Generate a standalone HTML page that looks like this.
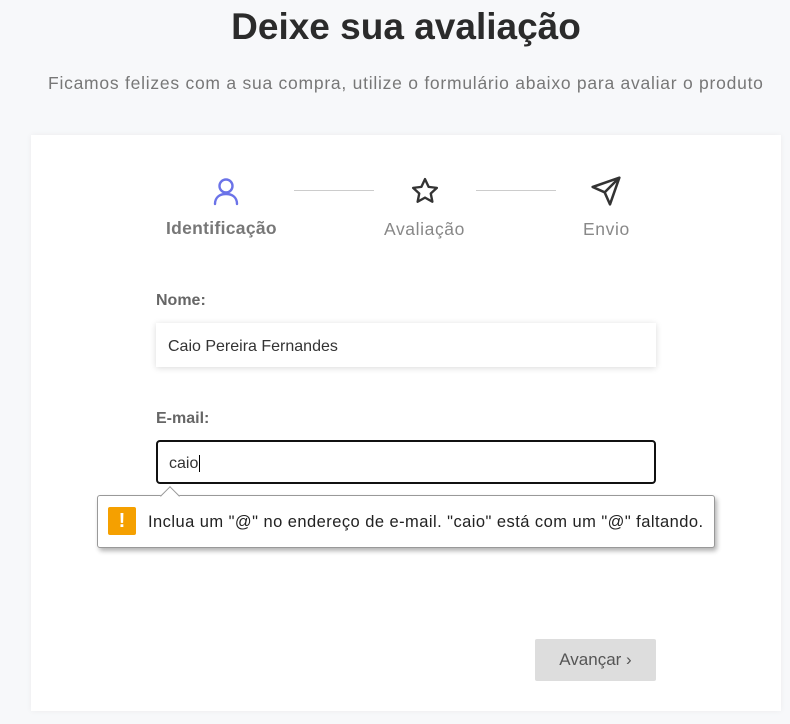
<!DOCTYPE html>
<html><head><meta charset="utf-8"><style>
*{box-sizing:border-box;margin:0;padding:0}
body{width:790px;height:724px;background:#f7f8fa;font-family:"Liberation Sans",sans-serif;position:relative;overflow:hidden;color:#333}
h1{position:absolute;top:6px;left:0;width:812px;text-align:center;font-size:37px;font-weight:bold;color:#2b2b2b}
.sub{position:absolute;top:73px;left:48px;font-size:17.5px;color:#777;letter-spacing:0.75px;white-space:nowrap}
.card{position:absolute;left:31px;top:135px;width:750px;height:576px;background:#fff;box-shadow:0 0 6px rgba(0,0,0,.05)}
.lbl{position:absolute;font-size:17.5px;color:#888;white-space:nowrap;letter-spacing:0.6px}
.line{position:absolute;top:190px;height:1px;background:#ccc}
.flab{position:absolute;left:156px;font-size:16px;font-weight:bold;color:#666}
.inp{position:absolute;left:156px;width:500px;height:44px;background:#fff;font-size:16px;color:#333;padding:14px 12px}
.tip{position:absolute;left:97px;top:495px;width:618px;height:53px;background:#fff;border:1px solid #999;border-radius:3px;box-shadow:2px 3px 5px rgba(0,0,0,.3);font-size:16.5px;color:#222}
.btn{position:absolute;left:535px;top:639px;width:121px;height:42px;background:#ddd;border-radius:2px;font-size:17px;color:#555;text-align:center;line-height:42px}
</style></head><body>
<h1>Deixe sua avaliação</h1>
<div class="sub">Ficamos felizes com a sua compra, utilize o formulário abaixo para avaliar o produto</div>
<div class="card"></div>
<svg style="position:absolute;left:212px;top:176px" width="28" height="30" viewBox="0 0 28 30" fill="none" stroke="#6b73e8" stroke-width="2.4" stroke-linecap="round"><circle cx="14" cy="10" r="6.5"/><path d="M3 28 C3 21 8 18 14 18 C20 18 25 21 25 28"/></svg>
<svg style="position:absolute;left:410px;top:176px" width="30" height="30" viewBox="0 0 24 24" fill="none" stroke="#333" stroke-width="1.9" stroke-linejoin="round"><path d="M12 2.5l2.9 6.2 6.6.8-4.9 4.5 1.3 6.6L12 17.3l-5.9 3.3 1.3-6.6-4.9-4.5 6.6-.8z"/></svg>
<svg style="position:absolute;left:590px;top:175px" width="32" height="32" viewBox="0 0 24 24" fill="none" stroke="#333" stroke-width="1.9" stroke-linejoin="round"><path d="M22 2L2 9l9 4 4 9z M22 2L11 13"/></svg>
<div class="line" style="left:294px;width:80px"></div>
<div class="line" style="left:476px;width:80px"></div>
<div class="lbl" style="left:166px;top:218px;font-weight:bold;color:#777;letter-spacing:0.3px">Identificação</div>
<div class="lbl" style="left:384px;top:219px">Avaliação</div>
<div class="lbl" style="left:583px;top:219px">Envio</div>
<div class="flab" style="top:292px">Nome:</div>
<div class="inp" style="top:323px;box-shadow:0 1px 6px rgba(0,0,0,.15);padding-top:15px">Caio Pereira Fernandes</div>
<div class="flab" style="top:410px">E-mail:</div>
<div class="inp" style="top:440px;border:2px solid #111;border-radius:4px;padding:13px 11px">caio<span style="border-left:1px solid #000;margin-left:1px"></span></div>
<div style="position:absolute;left:163px;width:14px;height:14px;background:#fff;border-left:1px solid #999;border-top:1px solid #999;transform:rotate(45deg);top:489px;z-index:2"></div>
<div class="tip"><div style="position:absolute;left:10px;top:11px;width:28px;height:28px;background:#f5a000;border-radius:2px;color:#fff;font-weight:bold;text-align:center;line-height:28px;font-size:20px">!</div><div style="position:absolute;left:50px;top:17px;white-space:nowrap;letter-spacing:0.45px">Inclua um "@" no endereço de e-mail. "caio" está com um "@" faltando.</div></div>
<div class="btn">Avançar ›</div>
</body></html>
